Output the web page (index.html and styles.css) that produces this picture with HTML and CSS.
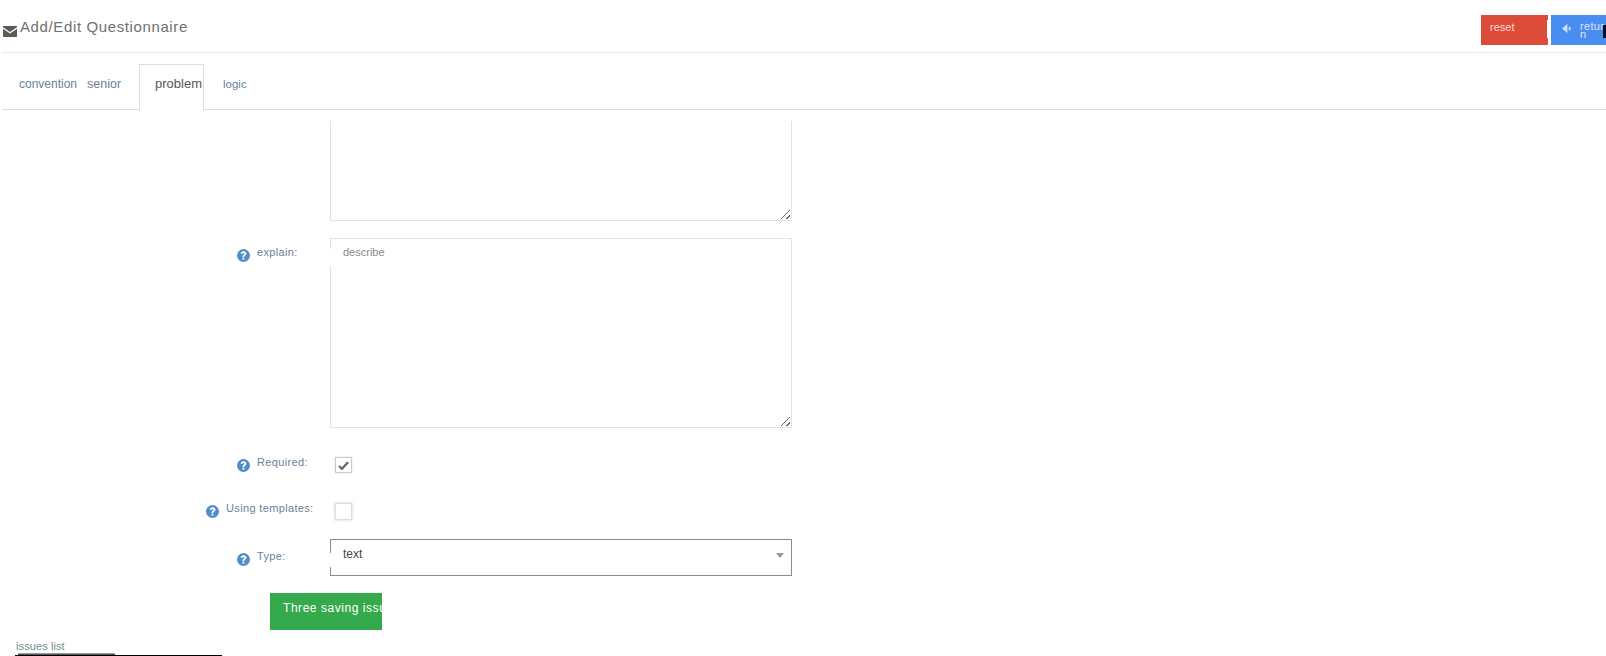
FILE: index.html
```html
<!DOCTYPE html>
<html lang="en">
<head>
<meta charset="utf-8">
<title>Add/Edit Questionnaire</title>
<link rel="stylesheet" href="styles.css">
</head>
<body>
<header class="header">
  <h1 class="title">
    <svg class="mail" viewBox="0 0 14 11"><path d="M0 1.2 7 6l7-4.800V0H0z M0 2.800V11h14V2.800L7 7.600z"/></svg>
    <span>Add/Edit Questionnaire</span>
  </h1>
  <div class="actions">
    <button class="btn btn-reset" type="button">reset</button>
    <button class="btn btn-return" type="button">
      <svg class="back" viewBox="0 0 10 10"><path d="M0 5 6 0v10z"/><rect x="7.500" y="3" width="2" height="4"/></svg>
      <span class="return-text">return</span>
    </button>
  </div>
</header>
<nav class="tabs">
  <a class="tab tab-convention">convention</a>
  <a class="tab tab-senior">senior</a>
  <a class="tab tab-active">problem</a>
  <a class="tab tab-logic">logic</a>
</nav>
<main class="form">
  <div class="row row-first">
    <div class="label"></div>
    <div class="area area-short"></div>
  </div>
  <div class="row row-explain">
    <label class="label label-explain"><svg class="help" viewBox="0 0 14 14"><circle cx="7" cy="7" r="7"/><path class="q" d="M3.900 5.200C4 3.300 5.300 2.300 7.100 2.300c1.800 0 3.100 1 3.100 2.600 0 1.200-.7 1.800-1.400 2.300-.6.400-.9.600-.9 1.200v.2H6v-.4c0-1.100.500-1.600 1.100-2 .5-.4.900-.7.900-1.200 0-.5-.4-.8-.9-.8-.6 0-1 .4-1.100 1z"/><rect class="q" x="6" y="9.400" width="1.900" height="2"/></svg><span>explain:</span></label>
    <div class="area area-tall"><span class="placeholder">describe</span></div>
  </div>
  <div class="row row-check">
    <label class="label"><svg class="help" viewBox="0 0 14 14"><circle cx="7" cy="7" r="7"/><path class="q" d="M3.900 5.200C4 3.300 5.300 2.300 7.100 2.300c1.800 0 3.100 1 3.100 2.600 0 1.200-.7 1.800-1.400 2.300-.6.400-.9.600-.9 1.200v.2H6v-.4c0-1.100.500-1.600 1.100-2 .5-.4.900-.7.900-1.200 0-.5-.4-.8-.9-.8-.6 0-1 .4-1.100 1z"/><rect class="q" x="6" y="9.400" width="1.900" height="2"/></svg><span>Required:</span></label>
    <span class="check"><svg viewBox="0 0 12 10"><path d="M1 5.500 4.300 8.700 11 1.500" fill="none" stroke="#666" stroke-width="2.500"/></svg></span>
  </div>
  <div class="row row-check">
    <label class="label label-wide"><svg class="help" viewBox="0 0 14 14"><circle cx="7" cy="7" r="7"/><path class="q" d="M3.900 5.200C4 3.300 5.300 2.300 7.100 2.300c1.800 0 3.100 1 3.100 2.600 0 1.200-.7 1.800-1.400 2.300-.6.400-.9.600-.9 1.200v.2H6v-.4c0-1.100.500-1.600 1.100-2 .5-.4.900-.7.900-1.200 0-.5-.4-.8-.9-.8-.6 0-1 .4-1.100 1z"/><rect class="q" x="6" y="9.400" width="1.900" height="2"/></svg><span>Using templates:</span></label>
    <span class="check check-empty"></span>
  </div>
  <div class="row row-select">
    <label class="label"><svg class="help" viewBox="0 0 14 14"><circle cx="7" cy="7" r="7"/><path class="q" d="M3.900 5.200C4 3.300 5.300 2.300 7.100 2.300c1.800 0 3.100 1 3.100 2.600 0 1.200-.7 1.800-1.400 2.300-.6.400-.9.600-.9 1.200v.2H6v-.4c0-1.100.500-1.600 1.100-2 .5-.4.900-.7.900-1.200 0-.5-.4-.8-.9-.8-.6 0-1 .4-1.100 1z"/><rect class="q" x="6" y="9.400" width="1.900" height="2"/></svg><span>Type:</span></label>
    <div class="select"><span>text</span><i class="caret"></i></div>
  </div>
  <div class="save-row"><button class="save" type="button">Three saving issues</button></div>
</main>
<footer class="list">
  <div class="list-title">issues list</div>
  <div class="list-rule"></div>
</footer>
</body>
</html>
```
FILE: styles.css
```css
* { box-sizing: border-box; }
html, body { margin: 0; height: 656px; overflow: hidden; background: #fff; }
body { font-family: "Liberation Sans", Arial, sans-serif; color: #6b7f99; }

.header { height: 53px; margin-left: 2px; display: flex; justify-content: space-between; border-bottom: 1px solid #e8e8e8; }
.title { margin: 0; padding: 18px 0 0 1px; display: flex; align-items: flex-start; gap: 3px; font-size: 15px; font-weight: 400; line-height: 18px; letter-spacing: .62px; color: #707070; }
.mail { width: 14px; height: 11px; margin-top: 8px; fill: #5e5a54; }
.actions { display: flex; align-items: flex-start; padding-top: 15px; gap: 3px; }
.btn { height: 30px; border: 0; padding: 0; margin: 0; color: #fff; font: 11px/12px "Liberation Sans", Arial, sans-serif; text-align: left; }
.btn-reset { width: 67px; background: #dd4b39; padding: 0 0 6px 9px; color: #ffd9d3; position: relative; }
.btn-reset::after { content: ""; position: absolute; right: -2px; top: 5px; width: 3px; height: 18px; background: #fff; }
.btn-return { width: 55px; background: #4a8df0; display: flex; align-items: flex-start; padding: 7px 0 0 11px; position: relative; }
.btn-return::after { content: ""; position: absolute; right: 0; top: 10px; width: 3px; height: 13px; background: #0a1020; }
.back { width: 9px; height: 9px; margin: 2px 9px 0 0; fill: #cfe2ff; }
.return-text { width: 26px; word-break: break-all; line-height: 8px; letter-spacing: .3px; color: #d8e7ff; }

.tabs { height: 57px; margin-left: 2px; padding-top: 11px; display: flex; align-items: stretch; border-bottom: 1px solid #ddd; }
.tab { display: block; padding-top: 13px; line-height: 14px; color: #6b7f99; }
.tab-convention { width: 68px; margin-left: 17px; font-size: 12px; }
.tab-senior { width: 52px; font-size: 12.500px; }
.tab-active { width: 65px; height: 46px; padding: 12px 0 0 15px; font-size: 13px; color: #555; background: #fff; border: 1px solid #ddd; border-bottom: 0; white-space: nowrap; }
.tab-logic { margin-left: 19px; font-size: 11.500px; }

.form { padding-top: 11px; }
.row { display: flex; align-items: flex-start; }
.label { width: 330px; padding-left: 237px; display: flex; align-items: flex-start; gap: 7px; font-size: 11px; line-height: 14px; letter-spacing: .35px; color: #6b7f99; }
.label-wide { padding-left: 206px; }
.label-explain { padding-top: 7px; }
.help { width: 13px; height: 13px; margin-top: 4px; fill: #4f8dca; flex: none; }
.help .q { fill: #fff; }
.area { width: 462px; border: 1px solid #e3e3e3; position: relative; }
.area::after { content: ""; position: absolute; right: 1px; bottom: 1px; width: 12px; height: 12px; background: repeating-linear-gradient(135deg, transparent 0 2px, #666 2px 3px, transparent 3px 4px); clip-path: polygon(100% 0, 100% 100%, 0 100%); }
.area-short { height: 100px; border-top: 0; }
.area-tall { height: 190px; padding: 6px 12px; font-size: 11px; line-height: 14px; color: #888; }
.area-tall::before { content: ""; position: absolute; left: -1px; top: 10px; width: 1px; height: 17px; background: #fff; }
.row-explain { margin-top: 17px; }
.row-check { height: 46px; padding-top: 26px; }
.row-check .label { padding-top: 1px; }
.check { width: 17px; height: 16px; margin-left: 5px; margin-top: 3px; border: 1px solid #ccc; box-shadow: 0 0 2px #ddd; display: flex; align-items: center; justify-content: center; }
.check svg { width: 11px; height: 9px; }
.check-empty { height: 17px; border-color: #ddd; box-shadow: 0 0 3px #ccc; }
.row-select { margin-top: 19px; }
.row-select .label { padding-top: 10px; }
.select { width: 462px; height: 37px; border: 1px solid #8c8c8c; padding: 7px 12px; display: flex; justify-content: space-between; align-items: flex-start; font-size: 12px; line-height: 14px; color: #444; position: relative; }
.select::before { content: ""; position: absolute; left: -1px; top: 13px; width: 1px; height: 14px; background: #fff; }
.caret { width: 0; height: 0; margin: 6px -5px 0 0; border-left: 4px solid transparent; border-right: 4px solid transparent; border-top: 5px solid #999; }
.save-row { padding: 17px 0 0 270px; }
.save { display: block; width: 112px; height: 37px; border: 0; padding: 0 0 8px 13px; background: #34aa4c; color: #fff; font: 12px/16px "Liberation Sans", Arial, sans-serif; letter-spacing: .55px; text-align: left; white-space: nowrap; overflow: hidden; }

.list { position: absolute; left: 15px; top: 640px; width: 207px; }
.list-title { padding-left: 1px; font-size: 11px; line-height: 12px; letter-spacing: .1px; color: #6a8f90; }
.list-rule { height: 3px; margin-top: 1px; border-bottom: 1px solid #000; position: relative; }
.list-rule::before { content: ""; position: absolute; left: 3px; top: 0; width: 97px; height: 2px; background: linear-gradient(#bbb, #333); }
```
